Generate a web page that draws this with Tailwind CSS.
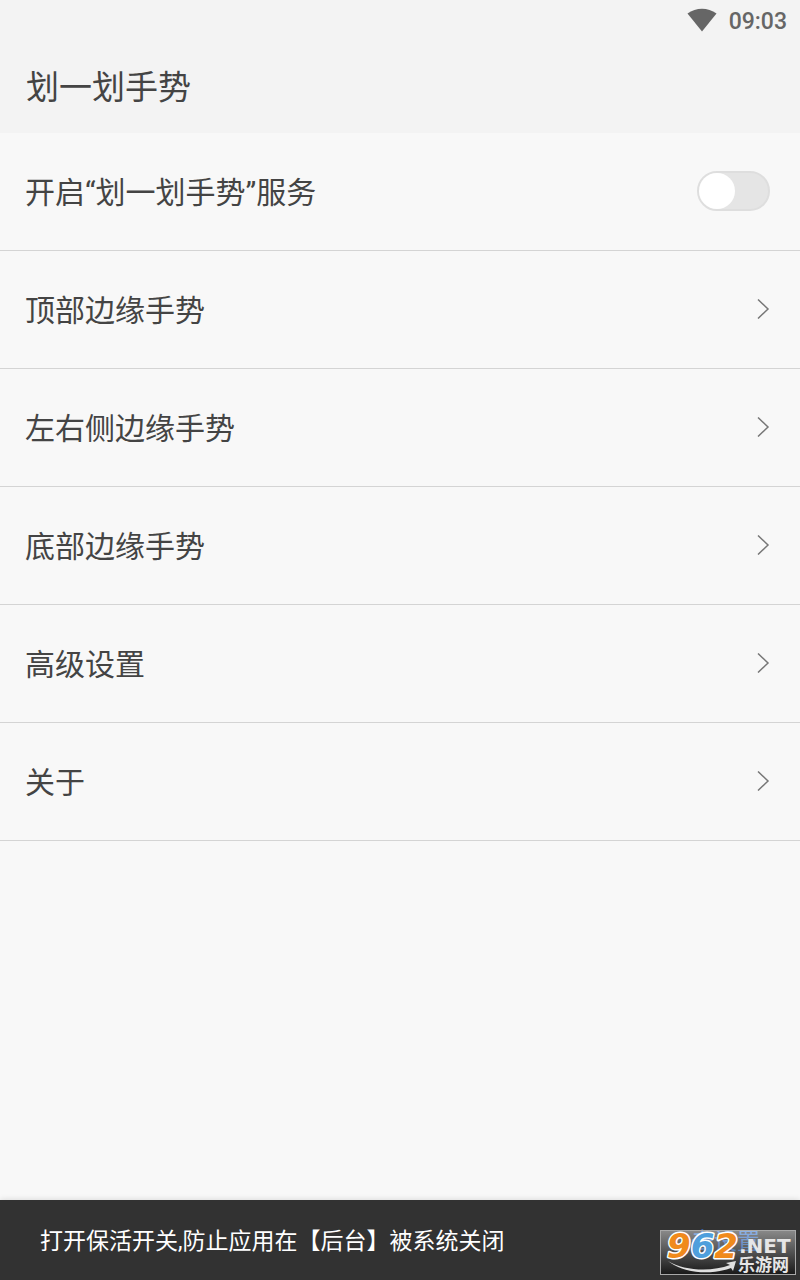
<!DOCTYPE html>
<html lang="zh-CN">
<head>
  <meta charset="UTF-8" />
  <meta name="viewport" content="width=device-width, initial-scale=1.0" />
  <title>划一划手势</title>
  <script src="https://cdn.jsdelivr.net/npm/@tailwindcss/browser@4"></script>
</head>
<body class="min-h-screen flex flex-col bg-[#f8f8f8] text-[#444444] font-['Roboto','Noto_Sans_CJK_SC',sans-serif]">
  <header class="bg-[#f3f3f3]">
    <!-- Status bar -->
    <div class="flex h-10 items-center justify-end gap-3 pr-[13px] text-[#666666]">
      <svg class="h-6 w-[30px]" viewBox="0 0 30 24" fill="currentColor" aria-hidden="true">
        <path d="M.5 5.5C9 -.8 21 -.8 29.5 5.5L15 23.5Z" />
      </svg>
      <span class="pt-1 text-[23px] leading-8 font-medium">09:03</span>
    </div>
    <h1 class="flex h-[93px] items-center px-[26px] pt-[2px] text-[33px] leading-[48px]">划一划手势</h1>
  </header>

  <main class="flex-1 text-[30px] leading-[44px]">
    <label class="flex h-[118px] items-center justify-between border-b border-[#d4d4d4] pr-[30px] pb-px pl-[25px]">
      <span class="pt-1">开启“划一划手势”服务</span>
      <input type="checkbox" role="switch" class="h-10 w-[73px] appearance-none rounded-full border-2 border-[#dedede] bg-[#e5e5e5] before:block before:size-9 before:rounded-full before:bg-white checked:bg-green-500 checked:before:translate-x-[33px]" />
    </label>
    <nav>
      <a href="#top" class="flex h-[118px] items-center justify-between border-b border-[#d4d4d4] pr-[30px] pb-px pl-[25px]">
        <span class="pt-1">顶部边缘手势</span>
        <svg class="h-5 w-[13px]" viewBox="0 0 13 20" fill="none" stroke="#777777" stroke-width="1.5" aria-hidden="true"><path d="M1 .5L11 10L1 19.5" /></svg>
      </a>
      <a href="#sides" class="flex h-[118px] items-center justify-between border-b border-[#d4d4d4] pr-[30px] pb-px pl-[25px]">
        <span class="pt-1">左右侧边缘手势</span>
        <svg class="h-5 w-[13px]" viewBox="0 0 13 20" fill="none" stroke="#777777" stroke-width="1.5" aria-hidden="true"><path d="M1 .5L11 10L1 19.5" /></svg>
      </a>
      <a href="#bottom" class="flex h-[118px] items-center justify-between border-b border-[#d4d4d4] pr-[30px] pb-px pl-[25px]">
        <span class="pt-1">底部边缘手势</span>
        <svg class="h-5 w-[13px]" viewBox="0 0 13 20" fill="none" stroke="#777777" stroke-width="1.5" aria-hidden="true"><path d="M1 .5L11 10L1 19.5" /></svg>
      </a>
      <a href="#advanced" class="flex h-[118px] items-center justify-between border-b border-[#d4d4d4] pr-[30px] pb-px pl-[25px]">
        <span class="pt-1">高级设置</span>
        <svg class="h-5 w-[13px]" viewBox="0 0 13 20" fill="none" stroke="#777777" stroke-width="1.5" aria-hidden="true"><path d="M1 .5L11 10L1 19.5" /></svg>
      </a>
      <a href="#about" class="flex h-[118px] items-center justify-between border-b border-[#d4d4d4] pr-[30px] pb-px pl-[25px]">
        <span class="pt-1">关于</span>
        <svg class="h-5 w-[13px]" viewBox="0 0 13 20" fill="none" stroke="#777777" stroke-width="1.5" aria-hidden="true"><path d="M1 .5L11 10L1 19.5" /></svg>
      </a>
    </nav>
  </main>

  <!-- Snackbar -->
  <footer class="relative flex h-20 items-center justify-between bg-[#323232] px-10 pt-1 text-[23px] leading-[34px] text-white shadow-[0_0_6px_rgba(0,0,0,0.15)]">
    <p>打开保活开关,防止应用在【后台】被系统关闭</p>
    <button type="button" class="text-[#3d86ee]">去设置</button>

    <!-- Site badge over the corner -->
    <svg class="pointer-events-none absolute right-1 bottom-[5px] h-[45px] w-[136px]" viewBox="0 0 136 45" role="img" aria-label="962.NET 乐游网">
      <defs>
        <linearGradient id="plate" x1="0" y1="0" x2="0" y2="1">
          <stop offset="0" stop-color="#e0e0e0" />
          <stop offset="1" stop-color="#000000" />
        </linearGradient>
      </defs>
      <rect x=".5" y=".5" width="135" height="44" fill="url(#plate)" fill-opacity=".5" stroke="#a8a8a8" />
      <path d="M8 31C24 41 52 42 70 35L66 33L76 31L73 41L71 38C52 45 24 44 8 31Z" fill="#e0e0e0" />
      <text x="7" y="28" font-family="'DejaVu Sans', sans-serif" font-weight="bold" font-style="italic" font-size="34" stroke="#ffffff" stroke-width="3" stroke-linejoin="round" paint-order="stroke"><tspan fill="#f08a1c">9</tspan><tspan fill="#4f9fdc">6</tspan><tspan fill="#f08a1c">2</tspan></text>
      <text x="79" y="23" fill="#e6e6e6" font-family="'DejaVu Sans', sans-serif" font-weight="bold" font-size="20">.NET</text>
      <text x="78" y="41" fill="#e6e6e6" font-family="'Noto Sans CJK SC', sans-serif" font-weight="bold" font-size="17">乐游网</text>
    </svg>
  </footer>
</body>
</html>
